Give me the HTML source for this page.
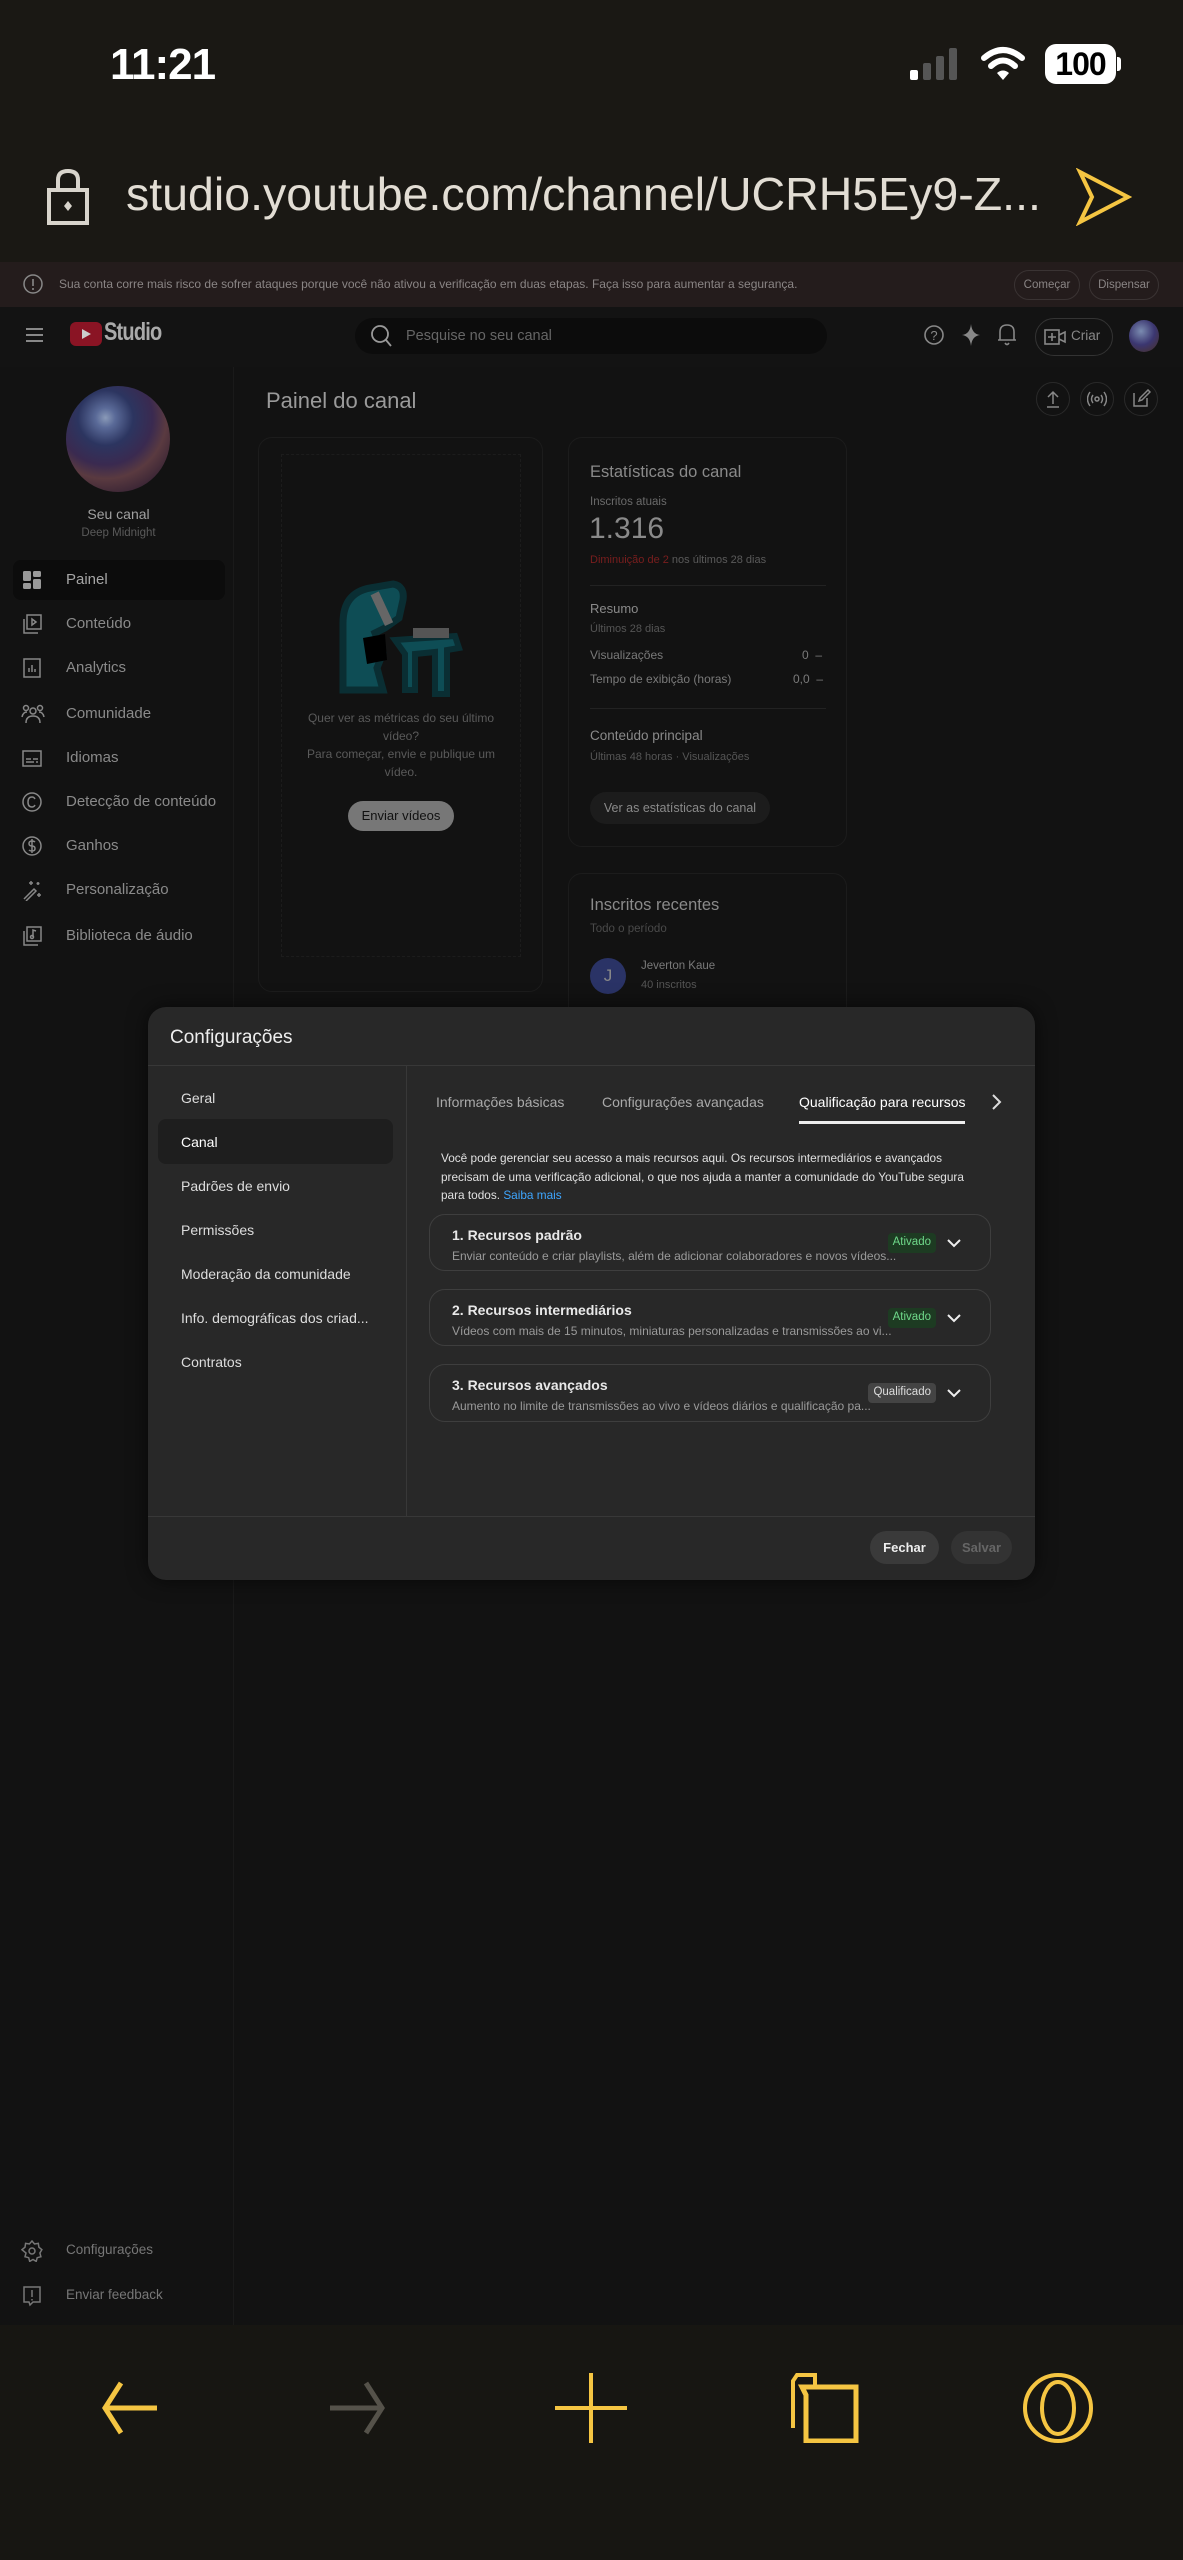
<!DOCTYPE html>
<html><head><meta charset="utf-8">
<style>
*{margin:0;padding:0;box-sizing:border-box}
body{width:1183px;height:2560px;background:#121212;font-family:"Liberation Sans",sans-serif;position:relative;overflow:hidden;color:#aaa}
.a{position:absolute;white-space:nowrap}
.nav{position:absolute;left:0;width:225px;height:40px;font-size:15px;color:#8a8a8a}
.nav svg{position:absolute;left:21px;top:10px}
.nav span{position:absolute;left:66px;top:12px}
.dn{position:absolute;left:181px;font-size:14px;color:#ddd}
.card{position:absolute;left:429px;width:562px;border:1.5px solid #3e3e3e;border-radius:16px}
.card .t{position:absolute;left:22px;top:12px;font-size:14px;font-weight:bold;color:#e8e8e8}
.card .s{position:absolute;left:22px;top:34px;font-size:12px;color:#9a9a9a}
.badge{position:absolute;top:18px;height:20px;padding:3px 5px;font-size:11.5px;border-radius:4px}
.chev{position:absolute;right:28px;top:22px}
</style></head><body>
<div class="a" style="left:0;top:0;width:1183px;height:262px;background:#1a1814"></div>
<div class="a" style="left:110px;top:40px;font-size:44px;font-weight:bold;color:#fff;letter-spacing:-1px">11:21</div>
<div class="a" style="left:910px;top:70px;width:8px;height:10px;background:#fff;border-radius:2px"></div>
<div class="a" style="left:923px;top:63px;width:8px;height:17px;background:#555;border-radius:2px"></div>
<div class="a" style="left:936px;top:56px;width:8px;height:24px;background:#555;border-radius:2px"></div>
<div class="a" style="left:949px;top:48px;width:8px;height:32px;background:#555;border-radius:2px"></div>
<svg class="a" style="left:980px;top:44px" width="46" height="38" viewBox="0 0 46 38"><path d="M4 14 Q23 -2 42 14" stroke="#fff" stroke-width="6" fill="none" stroke-linecap="round"/><path d="M11 22 Q23 11 35 22" stroke="#fff" stroke-width="6" fill="none" stroke-linecap="round"/><path d="M17 29 L23 36 L29 29 Q23 24 17 29Z" fill="#fff"/></svg>
<div class="a" style="left:1045px;top:44px;width:71px;height:40px;background:#fff;border-radius:11px;color:#000;font-size:32px;font-weight:bold;text-align:center;line-height:40px;letter-spacing:-1px">100</div>
<div class="a" style="left:1117px;top:57px;width:4px;height:14px;background:#fff;border-radius:0 3px 3px 0"></div>
<svg class="a" style="left:46px;top:168px" width="44" height="58" viewBox="0 0 44 58"><path d="M12 22 V12 Q12 3 22 3 Q32 3 32 12 V22" stroke="#d8d4cc" stroke-width="4" fill="none"/><rect x="3" y="22" width="38" height="33" stroke="#d8d4cc" stroke-width="4" fill="none"/><path d="M22 33 L26 38 L22 43 L18 38Z" fill="#d8d4cc"/></svg>
<div class="a" style="left:126px;top:167px;font-size:46.5px;color:#e2ddd4">studio.youtube.com/channel/UCRH5Ey9-Z...</div>
<svg class="a" style="left:1076px;top:168px" width="56" height="58" viewBox="0 0 56 58"><path d="M4 4 L52 29 L4 54 L16 29Z" stroke="#f5c542" stroke-width="4" fill="none"/></svg>
<div class="a" style="left:0;top:262px;width:1183px;height:45px;background:#241c1c"></div>
<svg class="a" style="left:22px;top:273px" width="22" height="22" viewBox="0 0 22 22"><circle cx="11" cy="11" r="9" stroke="#888" stroke-width="1.5" fill="none"/><path d="M11 6v7M11 15v2" stroke="#888" stroke-width="1.6"/></svg>
<div class="a" style="left:59px;top:277px;font-size:12px;color:#8a8585">Sua conta corre mais risco de sofrer ataques porque você não ativou a verificação em duas etapas. Faça isso para aumentar a segurança.</div>
<div class="a" style="left:1014px;top:270px;width:66px;height:30px;border:1px solid #3a3333;border-radius:15px;font-size:11.5px;color:#8a8585;text-align:center;line-height:28px">Começar</div>
<div class="a" style="left:1089px;top:270px;width:70px;height:30px;border:1px solid #3a3333;border-radius:15px;font-size:11.5px;color:#8a8585;text-align:center;line-height:28px">Dispensar</div>
<div class="a" style="left:0;top:307px;width:1183px;height:60px;background:#131313"></div>
<div class="a" style="left:26px;top:328px;width:17px;height:2px;background:#888;box-shadow:0 6px #888,0 12px #888"></div>
<div class="a" style="left:70px;top:322px;width:32px;height:24px;background:#8a1424;border-radius:6px"></div>
<div class="a" style="left:82px;top:329px;border-left:9px solid #ccc;border-top:5px solid transparent;border-bottom:5px solid transparent"></div>
<div class="a" style="left:104px;top:318px;font-size:25px;color:#aaa;letter-spacing:-1px;font-weight:bold;transform:scaleX(.8);transform-origin:left">Studio</div>
<div class="a" style="left:355px;top:318px;width:472px;height:36px;background:#0c0c0c;border-radius:18px"></div>
<svg class="a" style="left:369px;top:323px" width="24" height="26" viewBox="0 0 24 26"><circle cx="11" cy="11" r="8" stroke="#999" stroke-width="1.8" fill="none"/><path d="M17 17l5 6" stroke="#999" stroke-width="1.8"/></svg>
<div class="a" style="left:406px;top:328px;font-size:14.5px;color:#666">Pesquise no seu canal</div>
<svg class="a" style="left:922px;top:322px" width="24" height="26" viewBox="0 0 24 26"><circle cx="12" cy="13" r="9" stroke="#888" stroke-width="1.6" fill="none"/><text x="12" y="18" font-size="13" fill="#888" text-anchor="middle" font-family="Liberation Sans">?</text></svg>
<svg class="a" style="left:960px;top:322px" width="22" height="26" viewBox="0 0 22 26"><path d="M11 2 Q12 12 20 13 Q12 14 11 24 Q10 14 2 13 Q10 12 11 2Z" fill="#888"/></svg>
<svg class="a" style="left:996px;top:320px" width="22" height="28" viewBox="0 0 22 28"><path d="M4 20 V12 Q4 5 11 5 Q18 5 18 12 V20 Z M2 20 H20 M9 23 Q11 26 13 23" stroke="#888" stroke-width="1.6" fill="none"/></svg>
<div class="a" style="left:1035px;top:318px;width:78px;height:38px;border:1px solid #333;border-radius:19px"></div>
<svg class="a" style="left:1043px;top:327px" width="24" height="20" viewBox="0 0 24 20"><rect x="2" y="3" width="14" height="14" stroke="#888" stroke-width="1.6" fill="none"/><path d="M16 8l6-3v10l-6-3M9 6v8M5 10h8" stroke="#888" stroke-width="1.6" fill="none"/></svg>
<div class="a" style="left:1071px;top:328px;font-size:13.5px;color:#888">Criar</div>
<div class="a" style="left:1129px;top:320px;width:30px;height:32px;border-radius:50%;background:radial-gradient(circle at 40% 35%,#7a8bb0,#3b3670 50%,#4a3020)"></div>
<div class="a" style="left:233px;top:367px;width:1px;height:1960px;background:#1a1a1a"></div>
<div class="a" style="left:66px;top:386px;width:104px;height:106px;border-radius:50%;background:radial-gradient(circle at 38% 30%,#8a9ab8 0,#5a6a98 10%,#2c3560 28%,#3a2a50 48%,#5a3a40 62%,#3a2535 80%,#20182a)"></div>
<div class="a" style="left:0;top:506px;width:237px;text-align:center;font-size:14px;color:#a0a0a0">Seu canal</div>
<div class="a" style="left:0;top:527px;width:237px;text-align:center;font-size:11.5px;color:#5a5a5a">Deep Midnight</div>
<div class="a" style="left:13px;top:560px;width:212px;height:40px;background:#0c0c0c;border-radius:8px"></div>
<div class="nav" style="top:559px"><svg width="22" height="22" viewBox="0 0 22 22" fill="#999"><rect x="2" y="2" width="8" height="10" rx="1.5"/><rect x="12" y="2" width="8" height="6" rx="1.5"/><rect x="2" y="14" width="8" height="6" rx="1.5"/><rect x="12" y="10" width="8" height="10" rx="1.5"/></svg><span style="color:#a5a5a5">Painel</span></div>
<div class="nav" style="top:603px"><svg width="22" height="22" viewBox="0 0 22 22" fill="none" stroke="#888" stroke-width="1.5"><rect x="6" y="2" width="14" height="14"/><path d="M3 6v14h14M11 6v6l4-3z"/></svg><span>Conteúdo</span></div>
<div class="nav" style="top:647px"><svg width="22" height="22" viewBox="0 0 22 22" fill="none" stroke="#888" stroke-width="1.5"><rect x="3" y="2" width="16" height="18"/><path d="M8 15v-4M11 15v-7M14 15v-3"/></svg><span>Analytics</span></div>
<div class="nav" style="top:693px"><svg width="24" height="22" viewBox="0 0 24 22" fill="none" stroke="#888" stroke-width="1.5"><circle cx="12" cy="8" r="3"/><circle cx="5" cy="5" r="2.5"/><circle cx="19" cy="5" r="2.5"/><path d="M5 20q0-7 7-7t7 7M1 14q1-5 5-5M23 14q-1-5-5-5"/></svg><span>Comunidade</span></div>
<div class="nav" style="top:737px"><svg width="22" height="22" viewBox="0 0 22 22" fill="none" stroke="#888" stroke-width="1.5"><rect x="2" y="4" width="18" height="15"/><path d="M5 12h5M12 12h5M5 15h8M15 15h2"/></svg><span>Idiomas</span></div>
<div class="nav" style="top:781px"><svg width="22" height="22" viewBox="0 0 22 22" fill="none" stroke="#888" stroke-width="1.5"><circle cx="11" cy="11" r="9"/><path d="M14 8q-1-2-3-2-4 0-4 5t4 5q2 0 3-2"/></svg><span>Detecção de conteúdo</span></div>
<div class="nav" style="top:825px"><svg width="22" height="22" viewBox="0 0 22 22" fill="none" stroke="#888" stroke-width="1.5"><circle cx="11" cy="11" r="9"/><path d="M14 7q-1-1-3-1-3 0-3 2.5t3 2.5 3 2.5-3 2.5q-2 0-3-1M11 4v14"/></svg><span>Ganhos</span></div>
<div class="nav" style="top:869px"><svg width="22" height="22" viewBox="0 0 22 22" fill="none" stroke="#888" stroke-width="1.5"><path d="M3 20L13 10l2 2L5 22M10 2v4M8 4h4M17 3v3M15.5 4.5h3M18 14v4M16 16h4"/></svg><span>Personalização</span></div>
<div class="nav" style="top:915px"><svg width="22" height="22" viewBox="0 0 22 22" fill="none" stroke="#888" stroke-width="1.5"><rect x="6" y="2" width="14" height="14"/><path d="M3 6v14h14M12 12V5l3 1"/><circle cx="11" cy="12" r="1.5"/></svg><span>Biblioteca de áudio</span></div>
<div class="nav" style="top:2230px"><svg width="22" height="22" viewBox="0 0 22 22" fill="none" stroke="#777" stroke-width="1.5"><path d="M11 1l2.5 3 3.8-.6.6 3.8 3 2.5-2 3.3 1 3.7-3.7 1-1 3.7-3.2-1.9-3.3 1.9-1-3.7-3.7-1 1-3.7L1 9.7l3-2.5.6-3.8 3.8.6z"/><circle cx="11" cy="11" r="3"/></svg><span style="font-size:13.5px;color:#777">Configurações</span></div>
<div class="nav" style="top:2275px"><svg width="22" height="22" viewBox="0 0 22 22" fill="none" stroke="#777" stroke-width="1.5"><path d="M3 2h16v15h-7l-3 3-1-3H3z"/><path d="M11 5v7M11 14v1.5"/></svg><span style="font-size:13.5px;color:#777">Enviar feedback</span></div>
<div class="a" style="left:266px;top:388px;font-size:22px;color:#9a9a9a">Painel do canal</div>
<div class="a" style="left:1036px;top:382px;width:34px;height:34px;border:1px solid #2a2a2a;border-radius:50%"></div>
<div class="a" style="left:1080px;top:382px;width:34px;height:34px;border:1px solid #2a2a2a;border-radius:50%"></div>
<div class="a" style="left:1124px;top:382px;width:34px;height:34px;border:1px solid #2a2a2a;border-radius:50%"></div>
<svg class="a" style="left:1043px;top:389px" width="20" height="20" viewBox="0 0 20 20" fill="none" stroke="#888" stroke-width="1.5"><path d="M10 15V3M5 8l5-5 5 5M4 18h12"/></svg>
<svg class="a" style="left:1087px;top:389px" width="20" height="20" viewBox="0 0 20 20" fill="none" stroke="#888" stroke-width="1.5"><circle cx="10" cy="10" r="2"/><path d="M6 6q-3 4 0 8M14 6q3 4 0 8M3 3q-5 7 0 14M17 3q5 7 0 14"/></svg>
<svg class="a" style="left:1131px;top:389px" width="20" height="20" viewBox="0 0 20 20" fill="none" stroke="#888" stroke-width="1.5"><path d="M3 4v13h13V9M8 12l1-3 8-8 2 2-8 8z"/></svg>
<div class="a" style="left:258px;top:437px;width:285px;height:555px;border:1px solid #1c1c1c;border-radius:14px"></div>
<div class="a" style="left:281px;top:454px;width:240px;height:503px;border:1px dashed #1c1c1c"></div>
<svg class="a" style="left:335px;top:578px" width="130" height="120" viewBox="0 0 130 120">
<path d="M8 112 V45 Q8 15 35 10 L58 6 Q70 8 68 22 L64 40 L50 50 L40 55 L48 75 L42 90 L48 112 Z" fill="#0e4d55" stroke="#0a2e33" stroke-width="7"/>
<path d="M60 62 L120 58 L124 70 L112 72 L112 116 L100 116 L100 74 L80 76 L80 112 L70 112 L70 76 Z" fill="#0e4d55" stroke="#0a2e33" stroke-width="6"/>
<rect x="42" y="14" width="9" height="34" fill="#666" transform="rotate(-25 46 30)"/>
<rect x="78" y="50" width="36" height="10" fill="#555"/>
<path d="M28 60 L50 56 L52 82 L32 86 Z" fill="#000"/>
</svg>
<div class="a" style="left:291px;top:709px;width:220px;text-align:center;font-size:12px;line-height:18px;color:#5a5a5a;white-space:normal">Quer ver as métricas do seu último vídeo?<br>Para começar, envie e publique um vídeo.</div>
<div class="a" style="left:348px;top:801px;width:106px;height:30px;border-radius:15px;background:#777;color:#111;font-size:13px;text-align:center;line-height:30px">Enviar vídeos</div>
<div class="a" style="left:568px;top:437px;width:279px;height:410px;border:1px solid #1c1c1c;border-radius:14px"></div>
<div class="a" style="left:590px;top:463px;font-size:16.5px;color:#8a8a8a">Estatísticas do canal</div>
<div class="a" style="left:590px;top:496px;font-size:11.5px;color:#6a6a6a">Inscritos atuais</div>
<div class="a" style="left:589px;top:512px;font-size:30px;color:#8a8a8a">1.316</div>
<div class="a" style="left:590px;top:554px;font-size:11px;color:#5a5a5a"><span style="color:#7a1e1e">Diminuição de 2</span> nos últimos 28 dias</div>
<div class="a" style="left:590px;top:585px;width:236px;height:1px;background:#222"></div>
<div class="a" style="left:590px;top:601px;font-size:13px;color:#8a8a8a">Resumo</div>
<div class="a" style="left:590px;top:623px;font-size:11px;color:#555">Últimos 28 dias</div>
<div class="a" style="left:590px;top:648px;font-size:12px;color:#7a7a7a">Visualizações</div>
<div class="a" style="left:802px;top:648px;font-size:12px;color:#7a7a7a">0 &nbsp;–</div>
<div class="a" style="left:590px;top:672px;font-size:12px;color:#7a7a7a">Tempo de exibição (horas)</div>
<div class="a" style="left:793px;top:672px;font-size:12px;color:#7a7a7a">0,0 &nbsp;–</div>
<div class="a" style="left:590px;top:708px;width:236px;height:1px;background:#222"></div>
<div class="a" style="left:590px;top:728px;font-size:13.5px;color:#8a8a8a">Conteúdo principal</div>
<div class="a" style="left:590px;top:751px;font-size:11px;color:#555">Últimas 48 horas · Visualizações</div>
<div class="a" style="left:590px;top:792px;width:180px;height:32px;border-radius:16px;background:#1c1c1c;font-size:12.5px;color:#8a8a8a;text-align:center;line-height:32px">Ver as estatísticas do canal</div>
<div class="a" style="left:568px;top:873px;width:279px;height:200px;border:1px solid #1c1c1c;border-radius:14px"></div>
<div class="a" style="left:590px;top:896px;font-size:16.5px;color:#8a8a8a">Inscritos recentes</div>
<div class="a" style="left:590px;top:923px;font-size:11.5px;color:#4a4a4a">Todo o período</div>
<div class="a" style="left:590px;top:958px;width:36px;height:36px;border-radius:50%;background:#2a3366;color:#888;font-size:17px;text-align:center;line-height:36px">J</div>
<div class="a" style="left:641px;top:960px;font-size:11.5px;color:#7a7a7a">Jeverton Kaue</div>
<div class="a" style="left:641px;top:979px;font-size:11px;color:#555">40 inscritos</div>
<div class="a" style="left:148px;top:1007px;width:887px;height:573px;background:#282828;border-radius:18px;box-shadow:0 0 20px rgba(0,0,0,.6)">
  <div class="a" style="left:22px;top:20px;font-size:19px;color:#eee">Configurações</div>
  <div class="a" style="left:0;top:58px;width:887px;height:1px;background:#383838"></div>
  <div class="a" style="left:258px;top:59px;width:1px;height:450px;background:#383838"></div>
  <div class="a" style="left:0;top:509px;width:887px;height:1px;background:#383838"></div>
  <div class="a" style="left:10px;top:112px;width:235px;height:45px;background:#1e1e1e;border-radius:8px"></div>
</div>
<div class="dn" style="top:1090px">Geral</div>
<div class="dn" style="top:1134px;color:#fff">Canal</div>
<div class="dn" style="top:1178px">Padrões de envio</div>
<div class="dn" style="top:1222px">Permissões</div>
<div class="dn" style="top:1266px">Moderação da comunidade</div>
<div class="dn" style="top:1310px">Info. demográficas dos criad...</div>
<div class="dn" style="top:1354px">Contratos</div>
<div class="a" style="left:436px;top:1094px;font-size:14px;color:#aaa">Informações básicas</div>
<div class="a" style="left:602px;top:1094px;font-size:14px;color:#aaa">Configurações avançadas</div>
<div class="a" style="left:799px;top:1094px;font-size:14px;color:#fff">Qualificação para recursos</div>
<div class="a" style="left:799px;top:1121px;width:166px;height:3px;background:#eee"></div>
<svg class="a" style="left:990px;top:1093px" width="12" height="18" viewBox="0 0 12 18"><path d="M3 2l7 7-7 7" stroke="#ddd" stroke-width="2" fill="none"/></svg>
<div class="a" style="left:441px;top:1149px;font-size:11.8px;line-height:18.5px;color:#e0e0e0">Você pode gerenciar seu acesso a mais recursos aqui. Os recursos intermediários e avançados<br>precisam de uma verificação adicional, o que nos ajuda a manter a comunidade do YouTube segura<br>para todos. <span style="color:#3ea6ff">Saiba mais</span></div>
<div class="card" style="top:1214px;height:57px"><div class="t">1. Recursos padrão</div><div class="s">Enviar conteúdo e criar playlists, além de adicionar colaboradores e novos vídeos...</div><div class="badge" style="right:54px;background:#1d3b22;color:#6fd98a">Ativado</div><svg class="chev" width="16" height="12" viewBox="0 0 16 12"><path d="M2 3l6 6 6-6" stroke="#eee" stroke-width="2" fill="none"/></svg></div>
<div class="card" style="top:1289px;height:57px"><div class="t">2. Recursos intermediários</div><div class="s">Vídeos com mais de 15 minutos, miniaturas personalizadas e transmissões ao vi...</div><div class="badge" style="right:54px;background:#1d3b22;color:#6fd98a">Ativado</div><svg class="chev" width="16" height="12" viewBox="0 0 16 12"><path d="M2 3l6 6 6-6" stroke="#eee" stroke-width="2" fill="none"/></svg></div>
<div class="card" style="top:1364px;height:58px"><div class="t">3. Recursos avançados</div><div class="s">Aumento no limite de transmissões ao vivo e vídeos diários e qualificação pa...</div><div class="badge" style="right:54px;background:#444;color:#ddd">Qualificado</div><svg class="chev" width="16" height="12" viewBox="0 0 16 12"><path d="M2 3l6 6 6-6" stroke="#eee" stroke-width="2" fill="none"/></svg></div>
<div class="a" style="left:870px;top:1531px;width:69px;height:33px;border-radius:17px;background:#3a3a3a;color:#eee;font-size:13px;font-weight:bold;text-align:center;line-height:33px">Fechar</div>
<div class="a" style="left:951px;top:1531px;width:61px;height:33px;border-radius:17px;background:#333;color:#666;font-size:13px;font-weight:bold;text-align:center;line-height:33px">Salvar</div>
<div class="a" style="left:0;top:2325px;width:1183px;height:235px;background:#171612"></div>
<svg class="a" style="left:95px;top:2380px" width="64" height="56" viewBox="0 0 64 56"><path d="M26 3L10 28l16 25M10 28h52" stroke="#f5c542" stroke-width="5" fill="none"/></svg>
<svg class="a" style="left:328px;top:2380px" width="64" height="56" viewBox="0 0 64 56"><path d="M38 3l16 25-16 25M54 28H2" stroke="#55524a" stroke-width="5" fill="none"/></svg>
<svg class="a" style="left:555px;top:2373px" width="72" height="70" viewBox="0 0 72 70"><path d="M36 0v70M0 35h72" stroke="#f5c542" stroke-width="4" fill="none"/></svg>
<svg class="a" style="left:790px;top:2373px" width="70" height="70" viewBox="0 0 70 70"><path d="M3 55V8l4-6h18v10" stroke="#f5c542" stroke-width="4" fill="none"/><path d="M12 14h54v54H16V22z" stroke="#f5c542" stroke-width="5" fill="none"/></svg>
<svg class="a" style="left:1020px;top:2372px" width="76" height="72" viewBox="0 0 76 72"><ellipse cx="38" cy="36" rx="33" ry="33" stroke="#f5c542" stroke-width="4" fill="none"/><ellipse cx="38" cy="36" rx="16" ry="26" stroke="#f5c542" stroke-width="4" fill="none"/></svg>
</body></html>
